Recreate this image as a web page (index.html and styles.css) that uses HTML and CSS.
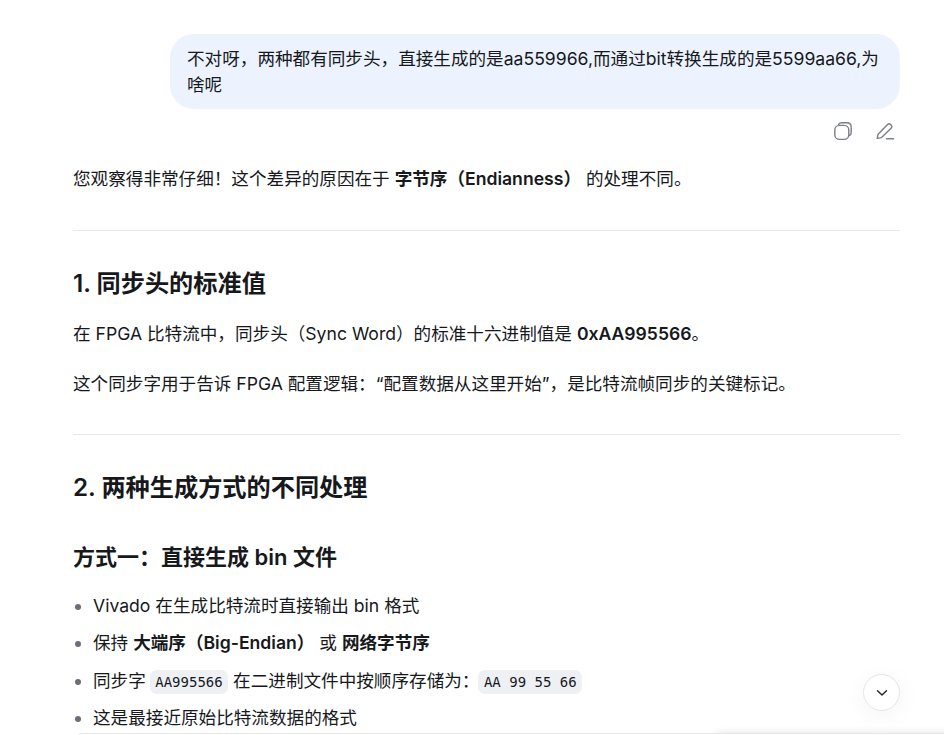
FILE: index.html
```html
<!DOCTYPE html>
<html lang="zh-CN">
<head>
<meta charset="utf-8">
<title>Chat</title>
<link rel="stylesheet" href="styles.css">
</head>
<body>
<main class="chat">
  <div class="user-row">
    <div class="bubble">不对呀&#xFF0C;两种都有同步头&#xFF0C;直接生成的是aa559966,而通过bit转换生成的是5599aa66,为啥呢</div>
  </div>
  <div class="actions">
    <svg class="icon" viewBox="0 0 20 20" width="20" height="20" fill="none" stroke="#7b7f86" stroke-width="1.4" stroke-linecap="round" stroke-linejoin="round"><rect x="1.8" y="4.4" width="14" height="14" rx="4.6"/><path d="M5.6 3.4c.7-1.1 1.8-1.6 3.2-1.6h5c2.6 0 4.4 1.8 4.4 4.4v5c0 1.4-.6 2.6-1.6 3.2"/></svg>
    <svg class="icon" viewBox="0 0 20 20" width="20" height="20" fill="none" stroke="#7b7f86" stroke-width="1.4" stroke-linecap="round" stroke-linejoin="round"><path d="M2.2 17.4l.9-4.2L12.6 3.4a2 2 0 0 1 2.9 0l.8.8a2 2 0 0 1 0 2.8L6.6 16.6z"/><path d="M11.5 17.8h7"/></svg>
  </div>
  <article class="answer">
    <p class="intro">您观察得非常仔细&#xFF01;这个差异的原因在于 <strong>字节序&#xFF08;Endianness&#xFF09;</strong> 的处理不同。</p>
    <hr>
    <h2>1. 同步头的标准值</h2>
    <p>在 FPGA 比特流中&#xFF0C;同步头&#xFF08;Sync Word&#xFF09;的标准十六进制值是 <strong>0xAA995566</strong>。</p>
    <p>这个同步字用于告诉 FPGA 配置逻辑&#xFF1A;“配置数据从这里开始”&#xFF0C;是比特流帧同步的关键标记。</p>
    <hr>
    <h2>2. 两种生成方式的不同处理</h2>
    <h3>方式一&#xFF1A;直接生成 bin 文件</h3>
    <ul>
      <li>Vivado 在生成比特流时直接输出 bin 格式</li>
      <li>保持 <strong>大端序&#xFF08;Big-Endian&#xFF09;</strong> 或 <strong>网络字节序</strong></li>
      <li>同步字 <code>AA995566</code> 在二进制文件中按顺序存储为&#xFF1A;<code>AA 99 55 66</code></li>
      <li>这是最接近原始比特流数据的格式</li>
    </ul>
  </article>
</main>
<button class="scroll-down" type="button" aria-label="滚动到底部">
  <svg viewBox="0 0 12 8" width="12" height="8" fill="none" stroke="#1f2329" stroke-width="1.4" stroke-linecap="round" stroke-linejoin="round"><path d="M1.5 1.8L6 6l4.5-4.2"/></svg>
</button>
<div class="composer-edge"></div>
</body>
</html>
```
FILE: styles.css
```css
* { box-sizing: border-box; }
html, body { margin: 0; height: 100%; overflow: hidden; background: #fff; }
body {
  font-family: Inter, "Noto Sans CJK SC", "Noto Sans", sans-serif;
  font-size: 17.6px;
  line-height: 26.4px;
  color: #16181c;
}
.chat { padding: 34px 44px 0 73px; }
.user-row { display: flex; justify-content: flex-end; }
.bubble {
  width: 730px;
  padding: 12px 17px 10px 17px;
  background: #ecf3fe;
  border-radius: 24px;
}
.actions { display: flex; justify-content: flex-end; gap: 22px; padding: 12px 5px 0 0; height: 44px; }
.icon { display: block; }
.answer p { margin: 0 0 23px; }
.answer .intro { margin-top: 13px; margin-bottom: 38px; }
strong { font-weight: 600; }
hr { border: 0; border-top: 1px solid #e8e9eb; margin: 0; }
h2 { font-size: 24.2px; line-height: 32px; font-weight: 600; margin: 37px 0 21px; }
h3 { font-size: 22px; line-height: 30px; font-weight: 600; margin: 38px 0 21px; }
.answer p + hr { margin-top: 37px; }
ul { margin: 0; padding: 0 0 0 20px; list-style: disc; }
li { margin-bottom: 11px; }
li::marker { color: #6b6f76; }
code {
  font-family: "DejaVu Sans Mono", "Liberation Mono", monospace;
  font-size: 14px;
  line-height: 1;
  background: #eef0f4;
  border-radius: 7px;
  padding: 4px 5.5px;
  margin-left: -1px;
}
.scroll-down {
  position: absolute;
  left: 863px;
  top: 674px;
  width: 37px;
  height: 37px;
  padding: 0;
  display: flex;
  align-items: center;
  justify-content: center;
  background: #fff;
  border: 1px solid #e4e5e7;
  border-radius: 50%;
  box-shadow: 0 4px 24px rgba(0,0,0,.05);
}
.composer-edge {
  position: absolute;
  left: 73px;
  right: 0;
  top: 733px;
  height: 10px;
  border-top: 1px solid #e6e7e9;
  border-radius: 12px 0 0 0;
  box-shadow: 640px -2px 6px rgba(0,0,0,.08);
}
```
